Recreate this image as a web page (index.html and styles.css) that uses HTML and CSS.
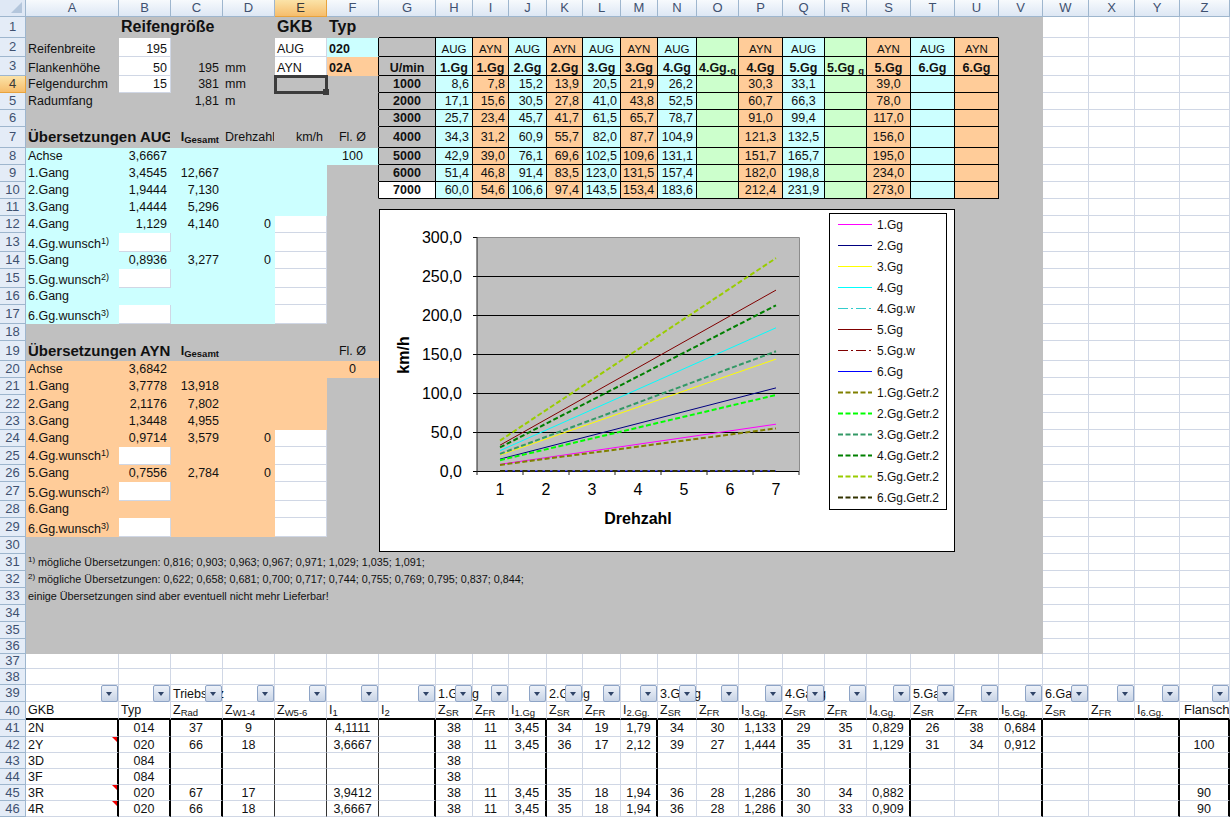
FILE: index.html
```html
<!DOCTYPE html>
<html lang="de">

<head>
    <meta charset="UTF-8">
    <title>Reifengröße - Übersetzungen</title>
    <link rel="stylesheet" href="styles.css">
</head>

<body>
    <div class="page">
        <table class="sheet">
            <colgroup>
                <col class="cw26"><col class="cw93"><col class="cw52"><col class="cw52"><col class="cw52"><col class="cw52"><col class="cw52"><col class="cw57">
                <col class="cw37"><col class="cw36"><col class="cw38"><col class="cw36"><col class="cw38"><col class="cw37"><col class="cw39"><col class="cw42">
                <col class="cw44"><col class="cw42"><col class="cw42"><col class="cw44"><col class="cw44"><col class="cw44"><col class="cw44">
                <col class="cw46"><col class="cw46"><col class="cw45"><col class="cw50">
            </colgroup>
            <thead>
                <tr class="h17">
                    <th class="corner"></th>
                    <th>A</th><th>B</th><th>C</th><th>D</th><th class="active">E</th><th>F</th><th>G</th><th>H</th><th>I</th><th>J</th><th>K</th><th>L</th><th>M</th><th>N</th><th>O</th><th>P</th><th>Q</th><th>R</th><th>S</th><th>T</th><th>U</th><th>V</th><th>W</th><th>X</th><th>Y</th><th>Z</th>
                </tr>
            </thead>
            <tbody>
                <!-- Reifengroesse + Geschwindigkeitstabelle -->
                <tr class="h21"><th>1</th><td class="g"></td><td class="g big" colspan="3">Reifengröße</td><td class="g big">GKB</td><td class="g big">Typ</td><td class="g kb" colspan="15"></td><td class="g"></td><td></td><td></td><td></td><td></td></tr>
                <tr class="h19"><th>2</th><td class="g">Reifenbreite</td><td class="r">195</td><td class="g"></td><td class="g"></td><td>AUG</td><td class="c b kr">020</td><td class="g k"></td><td class="c k m sm">AUG</td><td class="o k m sm">AYN</td><td class="c k m sm">AUG</td><td class="o k m sm">AYN</td><td class="c k m sm">AUG</td><td class="o k m sm">AYN</td><td class="c k m sm">AUG</td><td class="l k"></td><td class="o k m sm">AYN</td><td class="c k m sm">AUG</td><td class="l k"></td><td class="o k m sm">AYN</td><td class="c k m sm">AUG</td><td class="o k m sm">AYN</td><td class="g"></td><td></td><td></td><td></td><td></td></tr>
                <tr class="h19"><th>3</th><td class="g">Flankenhöhe</td><td class="r">50</td><td class="g r">195</td><td class="g">mm</td><td>AYN</td><td class="o b kr">02A</td><td class="g k m b">U/min</td><td class="c k m b">1.Gg</td><td class="o k m b">1.Gg</td><td class="c k m b">2.Gg</td><td class="o k m b">2.Gg</td><td class="c k m b">3.Gg</td><td class="o k m b">3.Gg</td><td class="c k m b">4.Gg</td><td class="l k m b tight">4.Gg.<sub class="s">g</sub></td><td class="o k m b">4.Gg</td><td class="c k m b">5.Gg</td><td class="l k m b tight">5.Gg <sub class="s">g</sub></td><td class="o k m b">5.Gg</td><td class="c k m b">6.Gg</td><td class="o k m b">6.Gg</td><td class="g"></td><td></td><td></td><td></td><td></td></tr>
                <tr class="h17"><th class="active">4</th><td class="g">Felgendurchm</td><td class="r">15</td><td class="g r">381</td><td class="g">mm</td><td class="g cursor"></td><td class="g kr"></td><td class="g k m b">1000</td><td class="c k r">8,6</td><td class="o k r">7,8</td><td class="c k r">15,2</td><td class="o k r">13,9</td><td class="c k r">20,5</td><td class="o k r">21,9</td><td class="c k r">26,2</td><td class="l k"></td><td class="o k m">30,3</td><td class="c k m">33,1</td><td class="l k"></td><td class="o k m">39,0</td><td class="c k"></td><td class="o k"></td><td class="g"></td><td></td><td></td><td></td><td></td></tr>
                <tr class="h17"><th>5</th><td class="g">Radumfang</td><td class="g"></td><td class="g r">1,81</td><td class="g">m</td><td class="g"></td><td class="g kr"></td><td class="g k m b">2000</td><td class="c k r">17,1</td><td class="o k r">15,6</td><td class="c k r">30,5</td><td class="o k r">27,8</td><td class="c k r">41,0</td><td class="o k r">43,8</td><td class="c k r">52,5</td><td class="l k"></td><td class="o k m">60,7</td><td class="c k m">66,3</td><td class="l k"></td><td class="o k m">78,0</td><td class="c k"></td><td class="o k"></td><td class="g"></td><td></td><td></td><td></td><td></td></tr>
                <tr class="h17"><th>6</th><td class="g" colspan="5"></td><td class="g kr"></td><td class="g k m b">3000</td><td class="c k r">25,7</td><td class="o k r">23,4</td><td class="c k r">45,7</td><td class="o k r">41,7</td><td class="c k r">61,5</td><td class="o k r">65,7</td><td class="c k r">78,7</td><td class="l k"></td><td class="o k m">91,0</td><td class="c k m">99,4</td><td class="l k"></td><td class="o k m">117,0</td><td class="c k"></td><td class="o k"></td><td class="g"></td><td></td><td></td><td></td><td></td></tr>
                <tr class="h21"><th>7</th><td class="g head" colspan="2">Übersetzungen AUG</td><td class="g r b">I<sub class="s">Gesamt</sub></td><td class="g">Drehzahl</td><td class="g r">km/h</td><td class="g m kr">Fl. Ø</td><td class="g k m b">4000</td><td class="c k r">34,3</td><td class="o k r">31,2</td><td class="c k r">60,9</td><td class="o k r">55,7</td><td class="c k r">82,0</td><td class="o k r">87,7</td><td class="c k r">104,9</td><td class="l k"></td><td class="o k m">121,3</td><td class="c k m">132,5</td><td class="l k"></td><td class="o k m">156,0</td><td class="c k"></td><td class="o k"></td><td class="g"></td><td></td><td></td><td></td><td></td></tr>
                <tr class="h17"><th>8</th><td class="c">Achse</td><td class="c r">3,6667</td><td class="c" colspan="3"></td><td class="c m kr">100</td><td class="g k m b">5000</td><td class="c k r">42,9</td><td class="o k r">39,0</td><td class="c k r">76,1</td><td class="o k r">69,6</td><td class="c k r">102,5</td><td class="o k r">109,6</td><td class="c k r">131,1</td><td class="l k"></td><td class="o k m">151,7</td><td class="c k m">165,7</td><td class="l k"></td><td class="o k m">195,0</td><td class="c k"></td><td class="o k"></td><td class="g"></td><td></td><td></td><td></td><td></td></tr>
                <tr class="h17"><th>9</th><td class="c">1.Gang</td><td class="c r">3,4545</td><td class="c r">12,667</td><td class="c" colspan="2"></td><td class="g kr"></td><td class="g k m b">6000</td><td class="c k r">51,4</td><td class="o k r">46,8</td><td class="c k r">91,4</td><td class="o k r">83,5</td><td class="c k r">123,0</td><td class="o k r">131,5</td><td class="c k r">157,4</td><td class="l k"></td><td class="o k m">182,0</td><td class="c k m">198,8</td><td class="l k"></td><td class="o k m">234,0</td><td class="c k"></td><td class="o k"></td><td class="g"></td><td></td><td></td><td></td><td></td></tr>
                <tr class="h17"><th>10</th><td class="c">2.Gang</td><td class="c r">1,9444</td><td class="c r">7,130</td><td class="c" colspan="2"></td><td class="g kr"></td><td class="k m b">7000</td><td class="c k r">60,0</td><td class="o k r">54,6</td><td class="c k r">106,6</td><td class="o k r">97,4</td><td class="c k r">143,5</td><td class="o k r">153,4</td><td class="c k r">183,6</td><td class="l k"></td><td class="o k m">212,4</td><td class="c k m">231,9</td><td class="l k"></td><td class="o k m">273,0</td><td class="c k"></td><td class="o k"></td><td class="g"></td><td></td><td></td><td></td><td></td></tr>
                <tr class="h17"><th>11</th><td class="c">3.Gang</td><td class="c r">1,4444</td><td class="c r">5,296</td><td class="c" colspan="2"></td><td class="g" colspan="17"></td><td></td><td></td><td></td><td></td></tr>
                <tr class="h17"><th>12</th><td class="c">4.Gang</td><td class="c r">1,129</td><td class="c r">4,140</td><td class="c r">0</td><td></td><td class="g" colspan="17"></td><td></td><td></td><td></td><td></td></tr>
                <tr class="h19"><th>13</th><td class="c">4.Gg.wunsch<sup class="fn">1)</sup></td><td></td><td class="c" colspan="2"></td><td></td><td class="g" colspan="17"></td><td></td><td></td><td></td><td></td></tr>
                <tr class="h17"><th>14</th><td class="c">5.Gang</td><td class="c r">0,8936</td><td class="c r">3,277</td><td class="c r">0</td><td></td><td class="g" colspan="17"></td><td></td><td></td><td></td><td></td></tr>
                <tr class="h19"><th>15</th><td class="c">5.Gg.wunsch<sup class="fn">2)</sup></td><td></td><td class="c" colspan="2"></td><td></td><td class="g" colspan="17"></td><td></td><td></td><td></td><td></td></tr>
                <tr class="h17"><th>16</th><td class="c">6.Gang</td><td class="c" colspan="3"></td><td></td><td class="g" colspan="17"></td><td></td><td></td><td></td><td></td></tr>
                <tr class="h19"><th>17</th><td class="c">6.Gg.wunsch<sup class="fn">3)</sup></td><td></td><td class="c" colspan="2"></td><td></td><td class="g" colspan="17"></td><td></td><td></td><td></td><td></td></tr>
                <tr class="h17"><th>18</th><td class="g" colspan="22"></td><td></td><td></td><td></td><td></td></tr>
                <tr class="h20"><th>19</th><td class="g head" colspan="2">Übersetzungen AYN</td><td class="g r b">I<sub class="s">Gesamt</sub></td><td class="g" colspan="2"></td><td class="g m">Fl. Ø</td><td class="g" colspan="16"></td><td></td><td></td><td></td><td></td></tr>
                <tr class="h17"><th>20</th><td class="o">Achse</td><td class="o r">3,6842</td><td class="o" colspan="3"></td><td class="o m">0</td><td class="g" colspan="16"></td><td></td><td></td><td></td><td></td></tr>
                <tr class="h17"><th>21</th><td class="o">1.Gang</td><td class="o r">3,7778</td><td class="o r">13,918</td><td class="o" colspan="2"></td><td class="g" colspan="17"></td><td></td><td></td><td></td><td></td></tr>
                <tr class="h18"><th>22</th><td class="o">2.Gang</td><td class="o r">2,1176</td><td class="o r">7,802</td><td class="o" colspan="2"></td><td class="g" colspan="17"></td><td></td><td></td><td></td><td></td></tr>
                <tr class="h17"><th>23</th><td class="o">3.Gang</td><td class="o r">1,3448</td><td class="o r">4,955</td><td class="o" colspan="2"></td><td class="g" colspan="17"></td><td></td><td></td><td></td><td></td></tr>
                <tr class="h17"><th>24</th><td class="o">4.Gang</td><td class="o r">0,9714</td><td class="o r">3,579</td><td class="o r">0</td><td></td><td class="g" colspan="17"></td><td></td><td></td><td></td><td></td></tr>
                <tr class="h18"><th>25</th><td class="o">4.Gg.wunsch<sup class="fn">1)</sup></td><td></td><td class="o" colspan="2"></td><td></td><td class="g" colspan="17"></td><td></td><td></td><td></td><td></td></tr>
                <tr class="h17"><th>26</th><td class="o">5.Gang</td><td class="o r">0,7556</td><td class="o r">2,784</td><td class="o r">0</td><td></td><td class="g" colspan="17"></td><td></td><td></td><td></td><td></td></tr>
                <tr class="h19"><th>27</th><td class="o">5.Gg.wunsch<sup class="fn">2)</sup></td><td></td><td class="o" colspan="2"></td><td></td><td class="g" colspan="17"></td><td></td><td></td><td></td><td></td></tr>
                <tr class="h17"><th>28</th><td class="o">6.Gang</td><td class="o" colspan="3"></td><td></td><td class="g" colspan="17"></td><td></td><td></td><td></td><td></td></tr>
                <tr class="h19"><th>29</th><td class="o">6.Gg.wunsch<sup class="fn">3)</sup></td><td></td><td class="o" colspan="2"></td><td></td><td class="g" colspan="17"></td><td></td><td></td><td></td><td></td></tr>
                <tr class="h17"><th>30</th><td class="g" colspan="22"></td><td></td><td></td><td></td><td></td></tr>
                <tr class="h17"><th>31</th><td class="g note" colspan="22"><sup class="fn">1)</sup> mögliche Übersetzungen: 0,816; 0,903; 0,963; 0,967; 0,971; 1,029; 1,035; 1,091;</td><td></td><td></td><td></td><td></td></tr>
                <tr class="h17"><th>32</th><td class="g note" colspan="22"><sup class="fn">2)</sup> mögliche Übersetzungen: 0,622; 0,658; 0,681; 0,700; 0,717; 0,744; 0,755; 0,769; 0,795; 0,837; 0,844;</td><td></td><td></td><td></td><td></td></tr>
                <tr class="h17"><th>33</th><td class="g note" colspan="22">einige Übersetzungen sind aber eventuell nicht mehr Lieferbar!</td><td></td><td></td><td></td><td></td></tr>
                <tr class="h17"><th>34</th><td class="g" colspan="22"></td><td></td><td></td><td></td><td></td></tr>
                <tr class="h17"><th>35</th><td class="g" colspan="22"></td><td></td><td></td><td></td><td></td></tr>
                <tr class="h15"><th>36</th><td class="g" colspan="22"></td><td></td><td></td><td></td><td></td></tr>
                <tr class="h15"><th>37</th><td></td><td></td><td></td><td></td><td></td><td></td><td></td><td></td><td></td><td></td><td></td><td></td><td></td><td></td><td></td><td></td><td></td><td></td><td></td><td></td><td></td><td></td><td></td><td></td><td></td><td></td></tr>
                <tr class="h16"><th>38</th><td></td><td></td><td></td><td></td><td></td><td></td><td></td><td></td><td></td><td></td><td></td><td></td><td></td><td></td><td></td><td></td><td></td><td></td><td></td><td></td><td></td><td></td><td></td><td></td><td></td><td></td></tr>

                <!-- Autofilter Zeile -->
                <tr class="h17 filters">
                    <th>39</th>
                    <td><span class="drop"></span></td><td><span class="drop"></span></td><td>Triebsatz<span class="drop"></span></td><td><span class="drop"></span></td><td><span class="drop"></span></td><td><span class="drop"></span></td><td><span class="drop"></span></td>
                    <td>1.Gang<span class="drop"></span></td><td><span class="drop"></span></td><td><span class="drop"></span></td>
                    <td>2.Gang<span class="drop"></span></td><td><span class="drop"></span></td><td><span class="drop"></span></td>
                    <td>3.Gang<span class="drop"></span></td><td><span class="drop"></span></td><td><span class="drop"></span></td>
                    <td>4.Gang<span class="drop"></span></td><td><span class="drop"></span></td><td><span class="drop"></span></td>
                    <td>5.Gang<span class="drop"></span></td><td><span class="drop"></span></td><td><span class="drop"></span></td>
                    <td>6.Gang<span class="drop"></span></td><td><span class="drop"></span></td><td><span class="drop"></span></td>
                    <td><span class="drop"></span></td>
                </tr>
                <tr class="h18 titles">
                    <th>40</th>
                    <td>GKB</td><td>Typ</td><td>Z<sub class="s">Rad</sub></td><td>Z<sub class="s">W1-4</sub></td><td>Z<sub class="s">W5-6</sub></td><td>I<sub class="s">1</sub></td><td>I<sub class="s">2</sub></td>
                    <td>Z<sub class="s">SR</sub></td><td>Z<sub class="s">FR</sub></td><td>I<sub class="s">1.Gg</sub></td>
                    <td>Z<sub class="s">SR</sub></td><td>Z<sub class="s">FR</sub></td><td>I<sub class="s">2.Gg.</sub></td>
                    <td>Z<sub class="s">SR</sub></td><td>Z<sub class="s">FR</sub></td><td>I<sub class="s">3.Gg.</sub></td>
                    <td>Z<sub class="s">SR</sub></td><td>Z<sub class="s">FR</sub></td><td>I<sub class="s">4.Gg.</sub></td>
                    <td>Z<sub class="s">SR</sub></td><td>Z<sub class="s">FR</sub></td><td>I<sub class="s">5.Gg.</sub></td>
                    <td>Z<sub class="s">SR</sub></td><td>Z<sub class="s">FR</sub></td><td>I<sub class="s">6.Gg.</sub></td>
                    <td>Flansch</td>
                </tr>

                <!-- Getriebedaten -->
                <tr class="h17 data"><th>41</th><td class="t">2N</td><td class="m t">014</td><td class="m t">37</td><td class="m tn">9</td><td class="tn"></td><td class="m tn">4,1111</td><td class="t"></td><td class="m">38</td><td class="m">11</td><td class="m t">3,45</td><td class="m">34</td><td class="m">19</td><td class="m t">1,79</td><td class="m">34</td><td class="m">30</td><td class="m t">1,133</td><td class="m">29</td><td class="m">35</td><td class="m t">0,829</td><td class="m">26</td><td class="m">38</td><td class="m t">0,684</td><td></td><td></td><td class="t"></td><td class="m t"></td></tr>
                <tr class="h16 data"><th>42</th><td class="t memo">2Y</td><td class="m t">020</td><td class="m t">66</td><td class="m tn">18</td><td class="tn"></td><td class="m tn">3,6667</td><td class="t"></td><td class="m">38</td><td class="m">11</td><td class="m t">3,45</td><td class="m">36</td><td class="m">17</td><td class="m t">2,12</td><td class="m">39</td><td class="m">27</td><td class="m t">1,444</td><td class="m">35</td><td class="m">31</td><td class="m t">1,129</td><td class="m">31</td><td class="m">34</td><td class="m t">0,912</td><td></td><td></td><td class="t"></td><td class="m t">100</td></tr>
                <tr class="h16 data"><th>43</th><td class="t">3D</td><td class="m t">084</td><td class="m t"></td><td class="m tn"></td><td class="tn"></td><td class="m tn"></td><td class="t"></td><td class="m">38</td><td class="m"></td><td class="m t"></td><td class="m"></td><td class="m"></td><td class="m t"></td><td class="m"></td><td class="m"></td><td class="m t"></td><td class="m"></td><td class="m"></td><td class="m t"></td><td class="m"></td><td class="m"></td><td class="m t"></td><td></td><td></td><td class="t"></td><td class="m t"></td></tr>
                <tr class="h16 data"><th>44</th><td class="t">3F</td><td class="m t">084</td><td class="m t"></td><td class="m tn"></td><td class="tn"></td><td class="m tn"></td><td class="t"></td><td class="m">38</td><td class="m"></td><td class="m t"></td><td class="m"></td><td class="m"></td><td class="m t"></td><td class="m"></td><td class="m"></td><td class="m t"></td><td class="m"></td><td class="m"></td><td class="m t"></td><td class="m"></td><td class="m"></td><td class="m t"></td><td></td><td></td><td class="t"></td><td class="m t"></td></tr>
                <tr class="h16 data"><th>45</th><td class="t memo">3R</td><td class="m t">020</td><td class="m t">67</td><td class="m tn">17</td><td class="tn"></td><td class="m tn">3,9412</td><td class="t"></td><td class="m">38</td><td class="m">11</td><td class="m t">3,45</td><td class="m">35</td><td class="m">18</td><td class="m t">1,94</td><td class="m">36</td><td class="m">28</td><td class="m t">1,286</td><td class="m">30</td><td class="m">34</td><td class="m t">0,882</td><td class="m"></td><td class="m"></td><td class="m t"></td><td></td><td></td><td class="t"></td><td class="m t">90</td></tr>
                <tr class="h16 data"><th>46</th><td class="t memo">4R</td><td class="m t">020</td><td class="m t">66</td><td class="m tn">18</td><td class="tn"></td><td class="m tn">3,6667</td><td class="t"></td><td class="m">38</td><td class="m">11</td><td class="m t">3,45</td><td class="m">35</td><td class="m">18</td><td class="m t">1,94</td><td class="m">36</td><td class="m">28</td><td class="m t">1,286</td><td class="m">30</td><td class="m">33</td><td class="m t">0,909</td><td class="m"></td><td class="m"></td><td class="m t"></td><td></td><td></td><td class="t"></td><td class="m t">90</td></tr>
            </tbody>
        </table>

        <!-- Diagramm liegt ueber den Zellen -->
        <svg class="chart" width="576" height="343" viewBox="379 209 576 343">
            <rect x="379.5" y="209.5" width="575" height="342" fill="#fff" stroke="#000"/>

            <rect x="477" y="237" width="322" height="234" fill="#c0c0c0"/>
            <path d="M477 237.5H799.5V471" fill="none" stroke="#8c8c8c"/>
            <path d="M473 276.5H799M473 315.5H799M473 354.5H799M473 393.5H799M473 432.5H799M473 471.5H799M473 237.5H477" stroke="#000" fill="none"/>
            <path d="M477 237V475M523 471V475M569 471V475M615 471V475M661 471V475M707 471V475M753 471V475M799 471V475" stroke="#222" fill="none"/>

            <g class="axis-y">
                <text x="462" y="243">300,0</text>
                <text x="462" y="282">250,0</text>
                <text x="462" y="321">200,0</text>
                <text x="462" y="360">150,0</text>
                <text x="462" y="399">100,0</text>
                <text x="462" y="438">50,0</text>
                <text x="462" y="477">0,0</text>
            </g>
            <g class="axis-x">
                <text x="500" y="495">1</text>
                <text x="546" y="495">2</text>
                <text x="592" y="495">3</text>
                <text x="638" y="495">4</text>
                <text x="684" y="495">5</text>
                <text x="730" y="495">6</text>
                <text x="776" y="495">7</text>
            </g>
            <text class="axis-title" x="638" y="524">Drehzahl</text>
            <text class="axis-title" transform="translate(409 355) rotate(-90)">km/h</text>

            <g class="solid">
                <path d="M500 464.3L776 424.2" stroke="#f0f"/>
                <path d="M500 459.1L776 387.9" stroke="#000080"/>
                <path d="M500 455L776 359.1" stroke="#ff0"/>
                <path d="M500 450.6L776 327.8" stroke="#0ff"/>
                <path d="M500 445.2L776 290.1" stroke="#800000"/>
                <path d="M500 471H776" stroke="#00f"/>
            </g>
            <g class="dashed">
                <path d="M500 471H776" stroke="#333300"/>
                <path d="M500 464.9L776 428.4" stroke="#808000"/>
                <path d="M500 460.2L776 395" stroke="#0f0"/>
                <path d="M500 453.9L776 351.3" stroke="#396"/>
                <path d="M500 447.4L776 305.3" stroke="#008000"/>
                <path d="M500 440.6L776 258.1" stroke="#9c0"/>
            </g>

            <!-- Legende -->
            <rect x="829.5" y="213.5" width="117" height="296" fill="#fff" stroke="#000"/>
            <g class="solid">
                <path d="M838 224.5H872" stroke="#f0f"/>
                <path d="M838 245.5H872" stroke="#000080"/>
                <path d="M838 266.5H872" stroke="#ff0"/>
                <path d="M838 287.5H872" stroke="#0ff"/>
                <path d="M838 329.5H872" stroke="#800000"/>
                <path d="M838 371.5H872" stroke="#00f"/>
            </g>
            <g class="dashdot">
                <path d="M838 308.5H872" stroke="#3cc"/>
                <path d="M838 350.5H872" stroke="#800000"/>
            </g>
            <g class="dashed">
                <path d="M838 392.5H872" stroke="#808000"/>
                <path d="M838 413.5H872" stroke="#0f0"/>
                <path d="M838 434.5H872" stroke="#396"/>
                <path d="M838 455.5H872" stroke="#008000"/>
                <path d="M838 476.5H872" stroke="#9c0"/>
                <path d="M838 497.5H872" stroke="#333300"/>
            </g>
            <g class="legend-text">
                <text x="877" y="229">1.Gg</text>
                <text x="877" y="250">2.Gg</text>
                <text x="877" y="271">3.Gg</text>
                <text x="877" y="292">4.Gg</text>
                <text x="877" y="313">4.Gg.w</text>
                <text x="877" y="334">5.Gg</text>
                <text x="877" y="355">5.Gg.w</text>
                <text x="877" y="376">6.Gg</text>
                <text x="877" y="397">1.Gg.Getr.2</text>
                <text x="877" y="418">2.Gg.Getr.2</text>
                <text x="877" y="439">3.Gg.Getr.2</text>
                <text x="877" y="460">4.Gg.Getr.2</text>
                <text x="877" y="481">5.Gg.Getr.2</text>
                <text x="877" y="502">6.Gg.Getr.2</text>
            </g>
        </svg>
    </div>
</body>

</html>
```

FILE: styles.css
```css
* {
    box-sizing: border-box;
}

html,
body {
    margin: 0;
    height: 817px;
    overflow: hidden;
    background-color: white;
}

.page {
    position: relative;
    width: 1230px;
    font-family: "Liberation Sans", Arial, sans-serif;
    color: #111;
}

/* Spaltenbreiten */
.cw26 { width: 26px; }
.cw36 { width: 36px; }
.cw37 { width: 37px; }
.cw38 { width: 38px; }
.cw39 { width: 39px; }
.cw42 { width: 42px; }
.cw44 { width: 44px; }
.cw45 { width: 45px; }
.cw46 { width: 46px; }
.cw50 { width: 50px; }
.cw52 { width: 52px; }
.cw57 { width: 57px; }
.cw93 { width: 93px; }

/* Zeilenhoehen */
.h15 > * { height: 15px; }
.h16 > * { height: 16px; }
.h17 > * { height: 17px; }
.h18 > * { height: 18px; }
.h19 > * { height: 19px; }
.h20 > * { height: 20px; }
.h21 > * { height: 21px; }

.sheet {
    table-layout: fixed;
    width: 1230px;
    border-collapse: separate;
    border-spacing: 0;
    font-size: 12.5px;
    line-height: 14px;
}

.sheet td {
    padding: 0 2px;
    border-style: solid;
    border-color: #d0d7e5;
    border-width: 0 1px 1px 0;
    white-space: nowrap;
    overflow: hidden;
    vertical-align: middle;
}

.sheet .h19 td {
    vertical-align: bottom;
}

.sheet th {
    padding: 0;
    font-size: 13px;
    font-weight: normal;
    color: #3f5170;
    text-align: center;
    background-color: #e4ecf7;
    border-style: solid;
    border-color: #9eb6ce;
    border-width: 0 1px 1px 0;
    overflow: hidden;
}

.sheet thead th {
    background: linear-gradient(#f7fafd, #dde7f4);
}

.sheet th.active {
    color: #3a3a3a;
    background: linear-gradient(#fbe3a8, #f6bd6c);
    border-color: #e8a33d;
}

.sheet th.corner {
    position: relative;
    background: #dfe8f5;
}

.corner::after {
    content: "";
    position: absolute;
    right: 3px;
    bottom: 3px;
    border-style: solid;
    border-width: 0 0 11px 11px;
    border-color: transparent transparent #b4c6dc transparent;
}

/* Zellfarben */
.sheet td.g { background-color: #c0c0c0; border-color: #c0c0c0; }
.sheet td.c { background-color: #ccffff; border-color: #ccffff; }
.sheet td.o { background-color: #ffcc99; border-color: #ffcc99; }
.sheet td.l { background-color: #ccffcc; border-color: #ccffcc; }

.sheet td.k { border-color: #000; }
.sheet td.kr { border-right-color: #000; }
.sheet td.kb { border-bottom-color: #000; }

.sheet td.r {
    text-align: right;
    padding-right: 3px;
}

.m { text-align: center; }
.b { font-weight: bold; }
.sm { font-size: 11.5px; }

.sheet td.tight {
    padding: 0;
    overflow: visible;
}

.big {
    font-size: 16px;
    font-weight: bold;
}

.head {
    font-size: 15px;
    font-weight: bold;
}

.note {
    font-size: 10.8px;
}

.s {
    font-size: 9.5px;
    line-height: 0;
    vertical-align: -2px;
}

.fn {
    font-size: 9px;
    line-height: 0;
    vertical-align: 4px;
}

.note .fn {
    font-size: 8px;
}

/* aktive Zelle E4 */
.sheet td.cursor {
    position: relative;
    overflow: visible;
    outline: 3px solid #3c3c3c;
    outline-offset: -2px;
}

.cursor::after {
    content: "";
    position: absolute;
    right: -3px;
    bottom: -3px;
    width: 6px;
    height: 6px;
    background-color: #3c3c3c;
}

/* Autofilter */
.filters td {
    position: relative;
}

.sheet .filters td {
    overflow: visible;
    padding-top: 1px;
}

.drop {
    position: absolute;
    top: 0;
    right: 0;
    z-index: 1;
    width: 17px;
    height: 17px;
    background: linear-gradient(#eef2f9, #c8d4e6);
    border: 1px solid #8ea4c6;
    border-radius: 2px;
}

.drop::after {
    content: "";
    position: absolute;
    left: 4px;
    top: 6px;
    border-style: solid;
    border-width: 4px 3.5px 0 3.5px;
    border-color: #2f4468 transparent transparent transparent;
}

.sheet .titles td {
    border-bottom: 2px solid #000;
}

.sheet .titles td:last-child {
    font-size: 13px;
    padding-left: 4px;
}

.sheet td.t {
    border-right: 2px solid #000;
}

.sheet td.tn {
    border-right: 1px solid #333;
}

.memo {
    position: relative;
}

.memo::after {
    content: "";
    position: absolute;
    top: 0;
    right: 0;
    border-style: solid;
    border-width: 0 5px 5px 0;
    border-color: transparent #f00000 transparent transparent;
}

/* Diagramm */
.chart {
    position: absolute;
    left: 379px;
    top: 209px;
    font-family: "Liberation Sans", Arial, sans-serif;
}

.axis-y text {
    font-size: 16px;
    text-anchor: end;
}

.axis-x text {
    font-size: 16px;
    text-anchor: middle;
}

.axis-title {
    font-size: 16px;
    font-weight: bold;
    text-anchor: middle;
}

.solid path {
    fill: none;
    stroke-width: 1;
}

.dashed path {
    fill: none;
    stroke-width: 2;
    stroke-dasharray: 5 2.5;
}

.dashdot path {
    fill: none;
    stroke-width: 1;
    stroke-dasharray: 10 3 2 3;
}

.legend-text text {
    font-size: 12px;
    fill: #111;
}
```
